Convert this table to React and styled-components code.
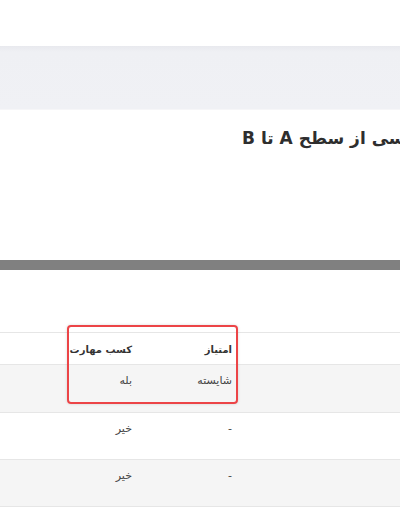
import React from "react";
import styled, { createGlobalStyle } from "styled-components";

const GlobalStyle = createGlobalStyle`
  html, body {
    margin: 0;
    padding: 0;
    background: #ffffff;
    font-family: "DejaVu Sans", "Noto Sans", sans-serif;
    overflow: hidden;
  }
`;

const Page = styled.div`
  width: 400px;
  height: 516px;
  overflow: hidden;
  position: relative;
  background: #fff;
`;

const TopSpace = styled.div`
  height: 46px;
`;

const Band = styled.div`
  height: 64px;
  background: linear-gradient(to bottom, #e8e9ee 0px, #eff0f4 6px, #f0f1f5 100%);
  border-bottom: 1px solid #f6f6f8;
  box-sizing: border-box;
`;

const TitleArea = styled.div`
  height: 150px;
  box-sizing: border-box;
  padding-top: 16px;
`;

const Title = styled.h2`
  margin: 0 0 0 242px;
  width: max-content;
  direction: rtl;
  white-space: nowrap;
  font-size: 17px;
  font-weight: 700;
  color: #2e2e2e;
  line-height: 24px;
`;

const Divider = styled.div`
  height: 10px;
  background: #808080;
`;

const Gap = styled.div`
  height: 62px;
`;

const Table = styled.div`
  position: relative;
  border-top: 1px solid #e6e6e6;
`;

const Row = styled.div`
  display: grid;
  grid-template-columns: 140px 100px 1fr;
  height: ${(p) => p.$h}px;
  background: ${(p) => (p.$shade ? "#f5f5f5" : "#ffffff")};
  border-bottom: 1px solid #e6e6e6;
  box-sizing: border-box;
`;

const Cell = styled.div`
  direction: rtl;
  text-align: right;
  padding: ${(p) => (p.$head ? "9px" : "8px")} 8px 0 0;
  font-size: ${(p) => (p.$head ? "10px" : "11px")};
  line-height: 16px;
  font-weight: ${(p) => (p.$head ? 700 : 400)};
  color: ${(p) => (p.$head ? "#333" : "#444")};
  white-space: nowrap;
`;

const Highlight = styled.div`
  position: absolute;
  left: 67px;
  top: -8px;
  width: 171px;
  height: 79px;
  border: 2px solid #ec4447;
  border-radius: 4px;
  box-sizing: border-box;
  box-shadow: 0 0 3px rgba(0, 0, 0, 0.15);
  pointer-events: none;
`;

const rows = [
  { skill: "بله", score: "شایسته", shade: true },
  { skill: "خیر", score: "-", shade: false },
  { skill: "خیر", score: "-", shade: true },
];

export default function App() {
  return (
    <Page>
      <GlobalStyle />
      <TopSpace />
      <Band />
      <TitleArea>
        <Title>دسترسی از سطح A تا B</Title>
      </TitleArea>
      <Divider />
      <Gap />
      <Table>
        <Row $h={32}>
          <Cell $head>کسب مهارت</Cell>
          <Cell $head>امتیاز</Cell>
          <Cell $head></Cell>
        </Row>
        {rows.map((r, i) => (
          <Row key={i} $h={i === 0 ? 48 : 47} $shade={r.shade}>
            <Cell>{r.skill}</Cell>
            <Cell>{r.score}</Cell>
            <Cell></Cell>
          </Row>
        ))}
        <Highlight />
      </Table>
    </Page>
  );
}
